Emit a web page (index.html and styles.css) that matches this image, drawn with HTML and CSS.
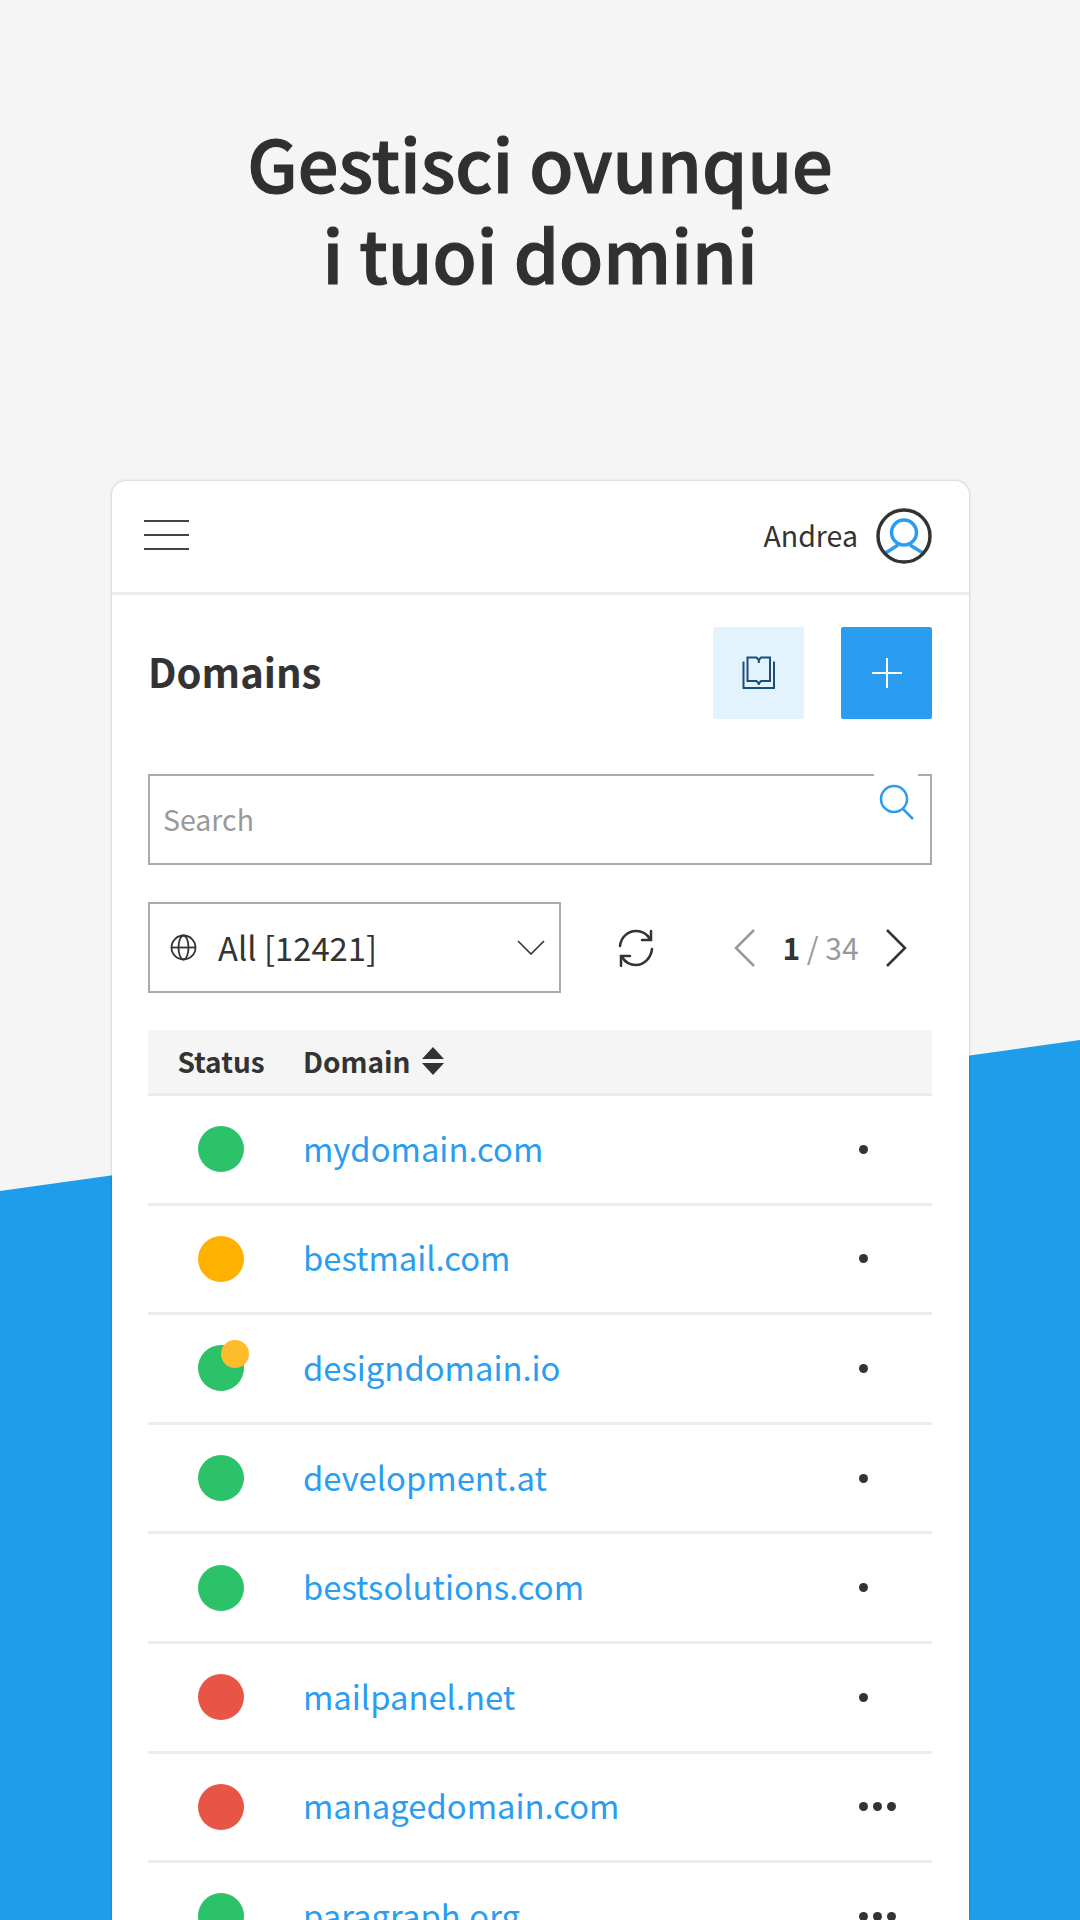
FILE: index.html
```html
<!DOCTYPE html>
<html lang="en">

<head>
    <meta charset="UTF-8">
    <title>Gestisci ovunque i tuoi domini</title>
    <link rel="stylesheet" href="styles.css">
</head>

<body>

    <div class="backdrop"></div>

    <h1 class="headline">Gestisci ovunque<br>i tuoi domini</h1>

    <div class="card">

        <!-- Top bar -->
        <div class="topbar">
            <div class="burger"><span></span><span></span><span></span></div>
            <div class="user">
                <span>Andrea</span>
                <svg width="56" height="56" viewBox="0 0 56 56" fill="none">
                    <path d="M9.500 45 L22 37 M47 45 L34 37" stroke="#2a9df0" stroke-width="3.500" />
                    <circle cx="28" cy="24.500" r="12.500" stroke="#2a9df0" stroke-width="3.500" />
                    <circle cx="28" cy="28" r="26" stroke="#333" stroke-width="3.500" />
                </svg>
            </div>
        </div>

        <div class="content">

            <!-- Title and actions -->
            <div class="title-row">
                <h2>Domains</h2>
                <div class="actions">
                    <button class="btn btn-light">
                        <svg width="34" height="34" viewBox="0 0 34 34" fill="none" stroke="#1c4f78" stroke-width="2">
                            <path d="M5.500 1.500 H14.500 L16.800 4 L19 1.500 H28 V25 H19 L16.800 27.500 L14.500 25 H5.500 Z" />
                            <path d="M16.800 4 V7 M16.800 27 V29" />
                            <path d="M1.500 5.500 V32 H32 V5.500" />
                        </svg>
                    </button>
                    <button class="btn btn-blue">
                        <svg width="32" height="32" viewBox="0 0 32 32" stroke="#fff" stroke-width="2">
                            <path d="M16 1 V31 M1 16 H31" />
                        </svg>
                    </button>
                </div>
            </div>

            <!-- Search -->
            <div class="search">
                <span>Search</span>
                <div class="search-icon">
                    <svg width="36" height="36" viewBox="0 0 36 36" fill="none" stroke="#2a9df0" stroke-width="2.500">
                        <circle cx="16" cy="15" r="13" />
                        <path d="M25 25 L35 35" />
                    </svg>
                </div>
            </div>

            <!-- Filter and paging -->
            <div class="filter-row">
                <div class="select">
                    <svg width="27" height="27" viewBox="0 0 27 27" fill="none" stroke="#333" stroke-width="1.800">
                        <circle cx="13.500" cy="13.500" r="12" />
                        <ellipse cx="13.500" cy="13.500" rx="5" ry="12" />
                        <path d="M1.500 13.500 H25.500" />
                    </svg>
                    <span class="select-label">All [12421]</span>
                    <svg class="select-arrow" width="28" height="15" viewBox="0 0 28 15" fill="none" stroke="#333" stroke-width="1.600">
                        <path d="M1 1 L14 14 L27 1" />
                    </svg>
                </div>
                <svg class="refresh" width="36" height="38" viewBox="0 0 36 38" fill="none" stroke="#333" stroke-width="2.500" stroke-linecap="round">
                    <path d="M2 17 C3 8 10 2 18 2 C24 2 29 5 32 10" />
                    <path d="M33 2 V11 H24" />
                    <path d="M34 20 C33 29 26 36 18 36 C12 36 7 33 4 28" />
                    <path d="M3 37 V27 H12" />
                </svg>
                <div class="pager">
                    <svg width="21" height="38" viewBox="0 0 21 38" fill="none" stroke="#999" stroke-width="2.500">
                        <path d="M20 1 L2 19 L20 37" />
                    </svg>
                    <div class="pages"><b>1</b> <i>/</i> <span>34</span></div>
                    <svg width="21" height="38" viewBox="0 0 21 38" fill="none" stroke="#333" stroke-width="2.500">
                        <path d="M1 1 L19 19 L1 37" />
                    </svg>
                </div>
            </div>

            <!-- Table -->
            <div class="table-head">
                <div class="col-status">Status</div>
                <div class="col-domain">Domain
                    <svg width="22" height="28" viewBox="0 0 22 28" fill="#333">
                        <path d="M11 0 L22 12 H0 Z M11 28 L0 16 H22 Z" />
                    </svg>
                </div>
            </div>

            <div class="row">
                <div class="col-status"><span class="dot green"></span></div>
                <a class="col-domain">mydomain.com</a>
                <div class="menu"><span></span></div>
            </div>
            <div class="row">
                <div class="col-status"><span class="dot amber"></span></div>
                <a class="col-domain">bestmail.com</a>
                <div class="menu"><span></span></div>
            </div>
            <div class="row">
                <div class="col-status"><span class="dot green"><em class="badge"></em></span></div>
                <a class="col-domain">designdomain.io</a>
                <div class="menu"><span></span></div>
            </div>
            <div class="row">
                <div class="col-status"><span class="dot green"></span></div>
                <a class="col-domain">development.at</a>
                <div class="menu"><span></span></div>
            </div>
            <div class="row">
                <div class="col-status"><span class="dot green"></span></div>
                <a class="col-domain">bestsolutions.com</a>
                <div class="menu"><span></span></div>
            </div>
            <div class="row">
                <div class="col-status"><span class="dot red"></span></div>
                <a class="col-domain">mailpanel.net</a>
                <div class="menu"><span></span></div>
            </div>
            <div class="row">
                <div class="col-status"><span class="dot red"></span></div>
                <a class="col-domain">managedomain.com</a>
                <div class="menu"><span></span><span></span><span></span></div>
            </div>
            <div class="row">
                <div class="col-status"><span class="dot green"></span></div>
                <a class="col-domain">paragraph.org</a>
                <div class="menu"><span></span><span></span><span></span></div>
            </div>

        </div>
    </div>

</body>

</html>
```

FILE: styles.css
```css
html,
body {
    height: 1920px;
}

body {
    margin: 0;
    overflow: hidden;
    position: relative;
    background: #f5f5f5;
    color: #333;
    font-family: "Noto Sans CJK SC", "Noto Sans", sans-serif;
}

/* Slanted blue area behind the card */
.backdrop {
    position: absolute;
    left: 0;
    right: 0;
    top: 1040px;
    bottom: 0;
    background: #1e9dea;
    clip-path: polygon(0 151px, 100% 0, 100% 100%, 0 100%);
}

.headline {
    position: relative;
    margin: 0;
    padding-top: 116px;
    height: 481px;
    box-sizing: border-box;
    font-size: 72px;
    font-weight: 500;
    -webkit-text-stroke: 1.200px #303030;
    color: #303030;
    line-height: 91px;
    text-align: center;
}

.card {
    position: relative;
    width: 857px;
    height: 1439px;
    margin-left: 112px;
    background: #fff;
    border-radius: 14px 14px 0 0;
    box-shadow: 0 0 3px rgba(0, 0, 0, 0.25);
}

.topbar {
    height: 108px;
    padding: 0 37px 3px 32px;
    border-bottom: 3px solid #ececec;
    display: flex;
    align-items: center;
    justify-content: space-between;
}

.burger {
    display: flex;
    flex-direction: column;
    gap: 12px;
    width: 45px;
}

.burger span {
    height: 2px;
    background: #444;
}

.user {
    display: flex;
    align-items: center;
    gap: 18px;
    font-size: 28.500px;
}

.user span {
    margin-bottom: 1px;
}

.user svg {
    margin-top: 2px;
}

.content {
    padding: 0 37px 0 36px;
}

.title-row {
    display: flex;
    align-items: center;
    justify-content: space-between;
    padding-top: 32px;
}

.title-row h2 {
    margin: 0 0 5px;
    font-size: 40px;
    font-weight: 700;
}

.actions {
    display: flex;
    gap: 37px;
}

.btn {
    width: 91px;
    height: 92px;
    border: none;
    border-radius: 2px;
    padding: 0;
    display: flex;
    align-items: center;
    justify-content: center;
}

.btn-light {
    background: #e3f3fd;
}

.btn-blue {
    background: #2a9df0;
}

.search {
    position: relative;
    margin-top: 55px;
    height: 91px;
    box-sizing: border-box;
    border: 2px solid #aaa;
    padding: 0 13px 2px;
    display: flex;
    align-items: center;
    font-size: 28.500px;
    color: #999;
}

/* White notch in the top border, above the input */
.search-icon {
    position: absolute;
    top: -2px;
    right: 12px;
    width: 44px;
    height: 46px;
    background: #fff;
    display: flex;
    align-items: flex-end;
    justify-content: center;
}

.filter-row {
    display: flex;
    align-items: center;
    margin-top: 37px;
}

.select {
    width: 413px;
    height: 91px;
    box-sizing: border-box;
    border: 2px solid #aaa;
    padding: 0 14px 0 20px;
    display: flex;
    align-items: center;
    flex: none;
}

.select-label {
    margin: 0 0 2px 21px;
    font-size: 32.800px;
    flex: 1;
}

.refresh {
    margin-left: 57px;
    flex: none;
}

.pager {
    display: flex;
    align-items: center;
    margin-left: 80px;
}

.pages {
    width: 131px;
    margin-bottom: 2px;
    text-align: center;
    font-size: 30px;
    color: #999;
}

.pages b {
    color: #333;
}

.pages i {
    font-style: normal;
}

.table-head {
    margin-top: 37px;
    height: 66px;
    padding-bottom: 2px;
    box-sizing: border-box;
    background: #f5f5f5;
    border-bottom: 3px solid #ebebeb;
    display: flex;
    align-items: center;
    font-size: 28px;
    font-weight: 700;
}

.col-status {
    width: 146px;
    margin-right: 9px;
    flex: none;
    display: flex;
    justify-content: center;
}

.table-head .col-domain {
    display: flex;
    align-items: center;
    gap: 11px;
}

.row {
    position: relative;
    height: 109.600px;
    box-sizing: border-box;
    border-bottom: 3px solid #ececec;
    display: flex;
    align-items: center;
}

a.col-domain {
    flex: 1;
    margin-bottom: 4px;
    font-size: 32.800px;
    color: #2a9df0;
}

.dot {
    position: relative;
    display: block;
    width: 46px;
    height: 46px;
    border-radius: 50%;
}

.green {
    background: #2bc26a;
}

.amber {
    background: #ffb100;
}

.red {
    background: #e85546;
}

.badge {
    position: absolute;
    top: -5px;
    right: -5px;
    width: 28px;
    height: 28px;
    border-radius: 50%;
    background: #fdbc2a;
}

.menu {
    width: 73px;
    flex: none;
    display: flex;
    gap: 5px;
}

.menu span {
    width: 9px;
    height: 9px;
    border-radius: 50%;
    background: #333;
}
```
